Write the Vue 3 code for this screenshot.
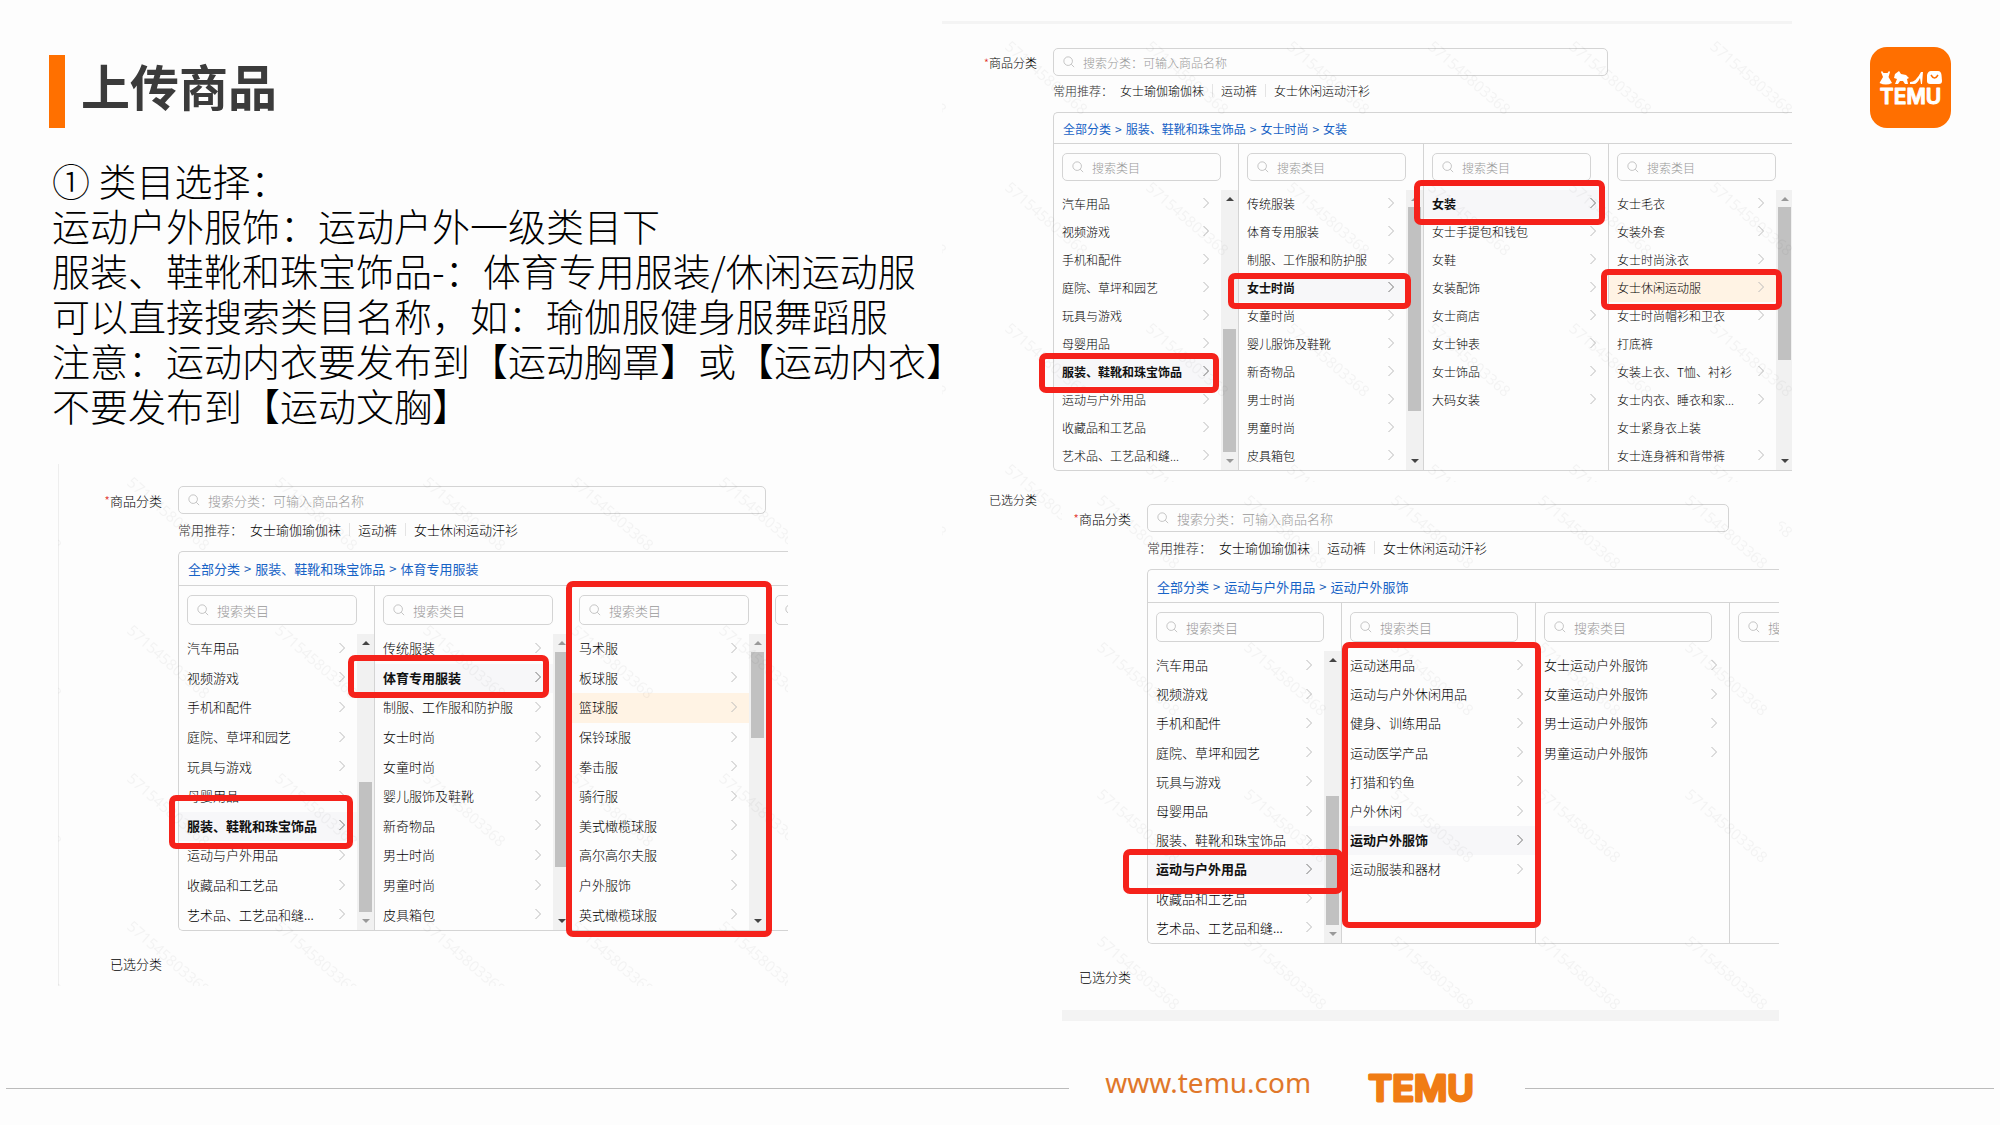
<template>
    <div class="slide">
        <main class="content">
            <div v-for="(group, g) in columns" :key="g" class="stack">
                <template v-if="g === 0">
                    <h1 class="title">上传商品</h1>
                    <p class="intro">
                        <span v-for="line in introLines" :key="line">{{ line }}</span>
                    </p>
                </template>

                <section v-for="panel in group" :key="panel.id" class="panel" :class="'panel-' + panel.id">
                    <!-- 搜索分类 -->
                    <div class="field">
                        <label class="field-label" :for="'search-' + panel.id"><i>*</i>商品分类</label>
                        <div class="search search-main">
                            <svg class="search-icon" viewBox="0 0 14 14">
                                <circle cx="6" cy="6" r="5" />
                                <path d="M9.6 9.6 L13 13" />
                            </svg>
                            <input :id="'search-' + panel.id" type="text" placeholder="搜索分类：可输入商品名称" />
                        </div>
                    </div>

                    <!-- 常用推荐 -->
                    <div class="suggest">
                        <span class="suggest-title">常用推荐：</span>
                        <button v-for="s in suggestions" :key="s" type="button">{{ s }}</button>
                    </div>

                    <div class="picker">
                        <nav class="crumbs">
                            <template v-for="(crumb, i) in panel.crumbs" :key="crumb">
                                <span v-if="i > 0">&gt;</span>
                                <a href="#" @click.prevent>{{ crumb }}</a>
                            </template>
                        </nav>
                        <div class="levels">
                            <div v-for="(level, l) in panel.levels" :key="l" class="level">
                                <div class="search search-level">
                                    <svg class="search-icon" viewBox="0 0 14 14">
                                        <circle cx="6" cy="6" r="5" />
                                        <path d="M9.6 9.6 L13 13" />
                                    </svg>
                                    <input type="text" placeholder="搜索类目" aria-label="搜索类目" />
                                </div>
                                <div class="level-body">
                                    <ul class="options">
                                        <li v-for="name in level.items" :key="name">
                                            <button type="button" class="option"
                                                :class="{ active: name === level.active, hover: name === level.hover }">
                                                <span>{{ name }}</span>
                                                <svg v-if="!leaves.includes(name)" class="chevron" viewBox="0 0 8 12">
                                                    <path d="M1.5 1 L6.5 6 L1.5 11" />
                                                </svg>
                                            </button>
                                        </li>
                                    </ul>
                                    <div v-if="level.thumb" class="scrollbar">
                                        <span class="arrow up" :class="{ dim: level.atTop }"></span>
                                        <span class="thumb"
                                            :style="{ top: level.thumb[0] + 'px', height: level.thumb[1] + 'px' }"></span>
                                        <span class="arrow down" :class="{ dim: !level.atTop }"></span>
                                    </div>
                                </div>
                            </div>
                        </div>
                    </div>

                    <div class="field field-selected">
                        <span class="field-label">已选分类</span>
                    </div>

                    <!-- 水印 -->
                    <svg class="watermark" aria-hidden="true">
                        <pattern :id="'wm-' + panel.id" patternUnits="userSpaceOnUse" :x="panel.mark.x"
                            :y="panel.mark.y" :width="panel.mark.size" :height="panel.mark.size">
                            <text x="4" y="12" transform="rotate(41 4 12)">571545803368</text>
                        </pattern>
                        <rect width="100%" height="100%" :fill="'url(#wm-' + panel.id + ')'" />
                    </svg>

                    <!-- 红框标注 -->
                    <span v-for="(box, b) in panel.boxes" :key="b" class="box" :style="boxStyle(box)"></span>
                </section>
            </div>

            <div class="brand">
                <svg class="app-icon" viewBox="0 0 81 81" role="img" aria-label="TEMU">
                    <rect width="81" height="81" rx="17" fill="#ff6f00" />
                    <g fill="#fff">
                        <path d="M12 24 L13.5 26 H17.5 L19 24 L20 25 L18.5 30 L22 36 Q16 39 9.5 36 L13 30 L11 25 Z" />
                        <path d="M25 27 L29 24 L31 27 L36 28 L39 31 L37 32 L38 37 L35 37 L33 34 L30 34 L28 37 L25 37 L27 32 L24 31 Z" />
                        <path d="M40 35 Q46 35 51 25 L53 25 L52 37 H51 L50 31 Q47 37 44 37 H40 Z" />
                        <path d="M57 28 Q58 24 61 24 H68 Q71 24 71.5 28 L72 34 Q72 37 69 37 H60 Q57 37 57 34 Z" />
                    </g>
                    <path d="M61 28 Q64.5 34 68 28" fill="none" stroke="#ff6f00" stroke-width="1.5" />
                    <text x="40.5" y="57" text-anchor="middle">TEMU</text>
                </svg>
            </div>
        </main>

        <footer class="footer">
            <span class="rule rule-left"></span>
            <a class="site" href="#" @click.prevent>www.temu.com</a>
            <svg class="wordmark" viewBox="0 0 112 32" role="img" aria-label="TEMU">
                <text x="56" y="29" text-anchor="middle">TEMU</text>
            </svg>
            <span class="rule rule-right"></span>
        </footer>
    </div>
</template>

<script setup>
const introLines = [
    '① 类目选择：',
    '运动户外服饰：运动户外一级类目下',
    '服装、鞋靴和珠宝饰品-：体育专用服装/休闲运动服',
    '可以直接搜索类目名称，如：瑜伽服健身服舞蹈服',
    '注意：运动内衣要发布到【运动胸罩】或【运动内衣】',
    '不要发布到【运动文胸】'
]

const suggestions = ['女士瑜伽瑜伽袜', '运动裤', '女士休闲运动汗衫']

// 没有下级的类目
const leaves = ['打底裤', '女士紧身衣上装']

const rootItems = [
    '汽车用品', '视频游戏', '手机和配件', '庭院、草坪和园艺', '玩具与游戏',
    '母婴用品', '服装、鞋靴和珠宝饰品', '运动与户外用品', '收藏品和工艺品', '艺术品、工艺品和缝...'
]

const clothingItems = [
    '传统服装', '体育专用服装', '制服、工作服和防护服', '女士时尚', '女童时尚',
    '婴儿服饰及鞋靴', '新奇物品', '男士时尚', '男童时尚', '皮具箱包'
]

// thumb: [top, height]，boxes: [left, top, width, height]
const sportswear = {
    id: 'sportswear',
    crumbs: ['全部分类', '服装、鞋靴和珠宝饰品', '体育专用服装'],
    mark: { x: 64, y: 8, size: 148 },
    levels: [
        { items: rootItems, active: '服装、鞋靴和珠宝饰品', thumb: [148, 130] },
        { items: clothingItems, active: '体育专用服装', thumb: [18, 215], atTop: true },
        {
            items: [
                '马术服', '板球服', '篮球服', '保铃球服', '拳击服',
                '骑行服', '美式橄榄球服', '高尔高尔夫服', '户外服饰', '英式橄榄球服'
            ],
            hover: '篮球服',
            thumb: [18, 86],
            atTop: true
        },
        { items: [] }
    ],
    boxes: [[111, 331, 184, 54], [290, 191, 201, 43], [508, 117, 206, 356]]
}

const women = {
    id: 'women',
    crumbs: ['全部分类', '服装、鞋靴和珠宝饰品', '女士时尚', '女装'],
    mark: { x: 58, y: 12, size: 141 },
    levels: [
        { items: rootItems, active: '服装、鞋靴和珠宝饰品', thumb: [139, 123] },
        { items: clothingItems, active: '女士时尚', thumb: [17, 204], atTop: true },
        {
            items: ['女装', '女士手提包和钱包', '女鞋', '女装配饰', '女士商店', '女士钟表', '女士饰品', '大码女装'],
            active: '女装'
        },
        {
            items: [
                '女士毛衣', '女装外套', '女士时尚泳衣', '女士休闲运动服', '女士时尚帽衫和卫衣',
                '打底裤', '女装上衣、T恤、衬衫', '女士内衣、睡衣和家...', '女士紧身衣上装', '女士连身裤和背带裤'
            ],
            hover: '女士休闲运动服',
            thumb: [17, 153],
            atTop: true
        }
    ],
    boxes: [[97, 329, 180, 40], [286, 249, 183, 36], [472, 156, 191, 45], [659, 245, 181, 41]]
}

const outdoor = {
    id: 'outdoor',
    crumbs: ['全部分类', '运动与户外用品', '运动户外服饰'],
    mark: { x: 30, y: 8, size: 147 },
    levels: [
        { items: rootItems, active: '运动与户外用品', thumb: [145, 129] },
        {
            items: [
                '运动迷用品', '运动与户外休闲用品', '健身、训练用品', '运动医学产品',
                '打猎和钓鱼', '户外休闲', '运动户外服饰', '运动服装和器材'
            ],
            active: '运动户外服饰'
        },
        { items: ['女士运动户外服饰', '女童运动户外服饰', '男士运动户外服饰', '男童运动户外服饰'] },
        { items: [] }
    ],
    boxes: [[61, 367, 220, 45], [280, 160, 199, 286]]
}

const columns = [[sportswear], [women, outdoor]]

function boxStyle([left, top, width, height]) {
    return {
        left: left + 'px',
        top: top + 'px',
        width: width + 'px',
        height: height + 'px'
    }
}
</script>

<style>
body {
    background: #fdfdfd;
}
</style>

<style scoped>
.slide {
    display: flex;
    flex-direction: column;
    min-height: 100vh;
    box-sizing: border-box;
    padding-bottom: 17px;
    background: #fdfdfd;
    color: #222;
    font-family: "Noto Sans CJK SC", sans-serif;
}

.content {
    display: grid;
    grid-template-columns: minmax(0, 942fr) minmax(0, 850fr) minmax(0, 208fr);
}

.title {
    display: flex;
    align-items: center;
    box-sizing: border-box;
    height: 73px;
    margin: 55px 0 0 49px;
    padding: 0 0 14px 16px;
    border-left: 16px solid #ff7000;
    color: #3b3b3b;
    font-size: 49px;
    font-weight: 700;
}

.intro {
    display: flex;
    flex-direction: column;
    margin: 29px 0 37px 52px;
    color: #000;
    font-size: 38px;
    font-weight: 300;
    line-height: 45px;
    white-space: nowrap;
}

/* 类目选择面板 */
.panel {
    position: relative;
    overflow: hidden;
    background: #fdfdfd;
    font-size: 13px;
    font-weight: 300;
    white-space: nowrap;
}

.panel-sportswear {
    --label: 104px;
    --level: 196px;
    --list: 296px;
    --bar: 30px;
    --crumbs: 34px;
    box-sizing: border-box;
    height: 522px;
    margin-left: 58px;
    margin-right: 154px;
    padding-top: 22px;
    box-shadow: inset 1px 0 #eee;
}

.panel-women {
    --label: 95px;
    --level: 185px;
    --list: 280px;
    --bar: 28px;
    --crumbs: 31px;
    height: 475px;
    margin-top: 21px;
    padding: 24px 0 20px;
    border-top: 3px solid #f4f4f4;
    font-size: 12px;
}

.panel-outdoor {
    --label: 69px;
    --level: 194px;
    --list: 292px;
    --bar: 30px;
    --crumbs: 33px;
    margin: -61px 13px 0 120px;
    padding-top: 22px;
    border-bottom: 11px solid #f3f3f3;
}

.field {
    display: flex;
    align-items: center;
    gap: 16px;
}

.field-label {
    width: var(--label);
    text-align: right;
    color: #000;
}

.field-label i {
    color: #e02e24;
    font-style: normal;
}

.search {
    display: flex;
    align-items: center;
    box-sizing: border-box;
    border: 1px solid #d4d4d4;
    border-radius: 5px;
    padding-left: 9px;
    gap: 8px;
}

.search-main {
    width: calc(var(--level) * 3);
    height: 28px;
}

.search-level {
    height: var(--bar);
    margin: 9px 17px 9px 8px;
}

.search-icon {
    flex: none;
    width: 12px;
    height: 12px;
    fill: none;
    stroke: #bbb;
}

.search input {
    flex: 1;
    min-width: 0;
    padding: 0;
    border: none;
    outline: none;
    background: none;
    color: #333;
    font: inherit;
}

.search input::placeholder {
    color: #999;
    opacity: 1;
}

.suggest {
    display: flex;
    align-items: center;
    height: 20px;
    margin: 5px 0 12px calc(var(--label) + 16px);
}

.panel-women .suggest {
    margin-top: 4px;
}

.suggest-title {
    color: #333;
    margin-right: 7px;
}

.suggest button {
    padding: 0;
    border: none;
    background: none;
    color: #000;
    font: inherit;
}

.suggest button + button {
    margin-left: 8px;
    padding-left: 8px;
    border-left: 1px solid #e4e4e4;
    line-height: 13px;
}

.picker {
    margin-left: calc(var(--label) + 16px);
    border: 1px solid #d4d4d4;
    border-right: none;
    border-radius: 5px 0 0 5px;
}

.crumbs {
    display: flex;
    align-items: center;
    gap: 4px;
    box-sizing: border-box;
    height: var(--crumbs);
    padding-left: 9px;
    border-bottom: 1px solid #d4d4d4;
    color: #1a5fb8;
    font-weight: 400;
}

.crumbs a {
    color: #1763c6;
    text-decoration: none;
}

.levels {
    display: flex;
}

.level {
    flex: none;
    box-sizing: border-box;
    width: var(--level);
    border-right: 1px solid #d4d4d4;
}

.level-body {
    display: flex;
    height: var(--list);
}

.options {
    flex: 1;
    display: grid;
    grid-template-rows: repeat(10, 1fr);
    min-width: 0;
    margin: 0;
    padding: 0;
    list-style: none;
}

.option {
    display: flex;
    align-items: center;
    justify-content: space-between;
    box-sizing: border-box;
    width: 100%;
    height: 100%;
    padding: 0 11px 2px 8px;
    border: none;
    background: none;
    color: #000;
    font: inherit;
    text-align: left;
}

.option.active {
    background: #f7f7f9;
    color: #111;
    font-weight: 700;
}

.option.hover {
    background: #fff3e4;
}

.chevron {
    flex: none;
    width: 8px;
    height: 12px;
    fill: none;
    stroke: #bbb;
}

.active .chevron {
    stroke: #777;
}

.scrollbar {
    position: relative;
    display: flex;
    flex-direction: column;
    justify-content: space-between;
    align-items: center;
    box-sizing: border-box;
    width: 17px;
    padding: 7px 0;
    background: #f1f1f1;
}

.thumb {
    position: absolute;
    left: 2px;
    right: 2px;
    background: #c1c1c1;
}

.arrow {
    border: 4px solid transparent;
}

.up {
    border-top: none;
    border-bottom-color: #444;
}

.down {
    border-bottom: none;
    border-top-color: #444;
}

.up.dim {
    border-bottom-color: #999;
}

.down.dim {
    border-top-color: #999;
}

.field-selected {
    height: 20px;
    margin-top: 22px;
}

.panel-women .field-selected {
    margin-top: 18px;
}

.panel-outdoor .field-selected {
    margin-bottom: 24px;
}

.watermark {
    position: absolute;
    top: 0;
    left: 0;
    width: 100%;
    height: 100%;
    pointer-events: none;
}

.watermark text {
    fill: #000;
    fill-opacity: 0.04;
    font-family: "Open Sans", sans-serif;
    font-size: 15px;
    font-weight: 400;
}

.box {
    position: absolute;
    box-sizing: border-box;
    border: 6px solid #f5221b;
    border-radius: 7px;
    pointer-events: none;
}

.brand {
    padding: 47px 0 0 78px;
}

.app-icon {
    display: block;
    width: 81px;
    height: 81px;
}

.app-icon text {
    fill: #fff;
    stroke: #fff;
    stroke-linejoin: round;
    font-family: Inter, sans-serif;
    font-size: 21px;
    font-weight: 600;
}

/* 页脚 */
.footer {
    display: flex;
    align-items: center;
    height: 40px;
    margin-top: auto;
    padding: 0 6px;
}

.rule {
    height: 1px;
    background: #bbb;
}

.rule-left {
    flex: 1066;
}

.rule-right {
    flex: 470;
}

.site {
    margin: 0 54px 12px 36px;
    color: #e0772a;
    font-family: "Noto Sans", "Open Sans", sans-serif;
    font-size: 28px;
    text-decoration: none;
}

.wordmark {
    width: 112px;
    height: 32px;
    margin-right: 48px;
}

.wordmark text {
    fill: #f07c14;
    stroke: #f07c14;
    stroke-width: 3px;
    stroke-linejoin: round;
    font-family: Inter, sans-serif;
    font-size: 36px;
    font-weight: 600;
}
</style>
